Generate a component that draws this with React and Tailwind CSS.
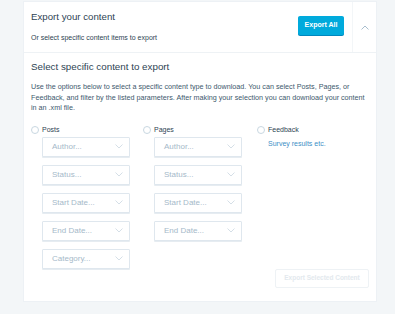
import React from "react";

const font = { fontFamily: '"Liberation Sans", Arial, sans-serif' };

function Chevron({ className = "" }) {
  return (
    <svg width="8" height="5" viewBox="0 0 8 5" className={className} fill="none">
      <polyline points="0.5,0.5 4,4 7.5,0.5" stroke="currentColor" strokeWidth="1" />
    </svg>
  );
}

function Select({ label }) {
  return (
    <div className="flex h-[20px] w-[88px] items-center justify-between rounded-[1px] border border-[#dfe7ee] bg-white pl-[9px] pr-[6px] shadow-[0_1px_0_#e6ecf1]">
      <span className="text-[8px] leading-[10px] text-[#a5b9c9]">{label}</span>
      <Chevron className="text-[#d5dfe7]" />
    </div>
  );
}

function Radio({ label }) {
  return (
    <div className="flex h-[10px] items-center">
      <span className="h-[8px] w-[8px] rounded-full border border-[#c8d7e1] bg-white" />
      <span className="ml-[3px] text-[7px] leading-[10px] text-[#2e4453]">{label}</span>
    </div>
  );
}

export default function App() {
  return (
    <div className="min-h-[314px] w-[395px] bg-[#f3f6f8] pt-[1px]" style={font}>
      <div className="ml-[23px] w-[354px] border border-[#edf1f5] bg-white">
        {/* header */}
        <div className="flex h-[51px] border-b border-[#eef2f5]">
          <div className="flex flex-1 items-start">
            <div className="flex-1 pl-[7px] pt-[9px]">
              <div className="text-[9.7px] leading-[12px] text-[#2e4453]">Export your content</div>
              <div className="mt-[10px] text-[7px] leading-[9px] text-[#2e4453]">
                Or select specific content items to export
              </div>
            </div>
            <div className="mr-[8px] mt-[14px] flex h-[19px] w-[46px] items-center justify-center rounded-[2px] bg-[#00aadc] text-[7px] font-bold text-white shadow-[0_1px_0_#0087be]">
              Export All
            </div>
          </div>
          <div className="flex w-[24px] items-center justify-center border-l border-[#f3f6f8]">
            <Chevron className="rotate-180 text-[#a8bece]" />
          </div>
        </div>

        {/* body */}
        <div className="px-[7px] pb-[13px] pt-[8px]">
          <div className="text-[9.8px] leading-[12px] text-[#2e4453]">Select specific content to export</div>
          <p className="mt-[9px] text-[7.2px] leading-[10.5px] text-[#3d596d]">
            Use the options below to select a specific content type to download. You can select Posts, Pages, or
            Feedback, and filter by the listed parameters. After making your selection you can download your content
            in an .xml file.
          </p>
          <div className="mt-[11px] grid grid-cols-[112px_114px_1fr]">
            <div>
              <Radio label="Posts" />
              <div className="mt-[2px] flex flex-col gap-[8px] pl-[11px]">
                <Select label="Author..." />
                <Select label="Status..." />
                <Select label="Start Date..." />
                <Select label="End Date..." />
                <Select label="Category..." />
              </div>
            </div>
            <div>
              <Radio label="Pages" />
              <div className="mt-[2px] flex flex-col gap-[8px] pl-[11px]">
                <Select label="Author..." />
                <Select label="Status..." />
                <Select label="Start Date..." />
                <Select label="End Date..." />
              </div>
            </div>
            <div>
              <Radio label="Feedback" />
              <div className="mt-[4px] pl-[11px] text-[7px] leading-[10px] text-[#3d8fc6]">Survey results etc.</div>
            </div>
          </div>
          <div className="flex justify-end">
            <div className="flex h-[19px] w-[94px] items-center justify-center rounded-[2px] border border-[#eef2f5] text-[6.5px] font-bold text-[#e3e9ee]">
              Export Selected Content
            </div>
          </div>
        </div>
      </div>
    </div>
  );
}
